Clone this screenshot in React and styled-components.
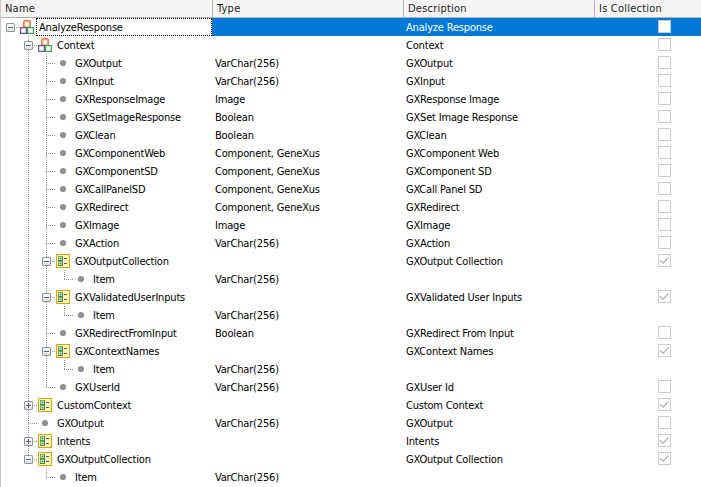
import React from "react";
import styled, { createGlobalStyle, css } from "styled-components";

const GlobalStyle = createGlobalStyle`
  body { margin: 0; background: #fff; overflow: hidden; }
`;

const dotsY = "repeating-linear-gradient(to bottom, #929292 0 1px, transparent 1px 2px)";
const dotsX = "repeating-linear-gradient(to right, #929292 0 1px, transparent 1px 2px)";

const TreeGrid = styled.div`
  box-sizing: border-box;
  width: 701px;
  height: 487px;
  overflow: hidden;
  border-left: 1px solid #c8c8c8;
  background: #fff;
  color: #000;
  font: 11px/19px Tahoma, "DejaVu Sans Condensed", "DejaVu Sans", sans-serif;
  font-stretch: condensed;
  letter-spacing: -0.18px;
  white-space: nowrap;
`;

const columns = css`
  display: grid;
  grid-template-columns: 211px 191px 191px 107px;
`;

const Header = styled.div`
  ${columns}
  box-sizing: border-box;
  height: 18px;
  background: #f4f4f4;
  border-bottom: 1px solid #b4b4b4;
`;

const HeaderCell = styled.div`
  box-sizing: border-box;
  padding-left: 4px;
  line-height: 17px;
  color: #1e1e1e;
  letter-spacing: 0.22px;
  & + & { border-left: 1px solid #b4b4b4; }
`;

const Row = styled.div`
  ${columns}
  grid-template-rows: 18px;
  height: 18px;
`;

const NameCell = styled.div`
  display: flex;
  padding-left: 1px;
  min-width: 0;
`;

const Guide = styled.span`
  flex: none;
  display: flex;
  align-items: center;
  width: 18px;
  height: 18px;
  background-repeat: no-repeat;
  background-image: ${(p) =>
    [p.$up && dotsY, p.$down && dotsY, p.$arm && dotsX].filter(Boolean).join(", ") || "none"};
  background-size: ${(p) =>
    [p.$up && "1px 10px", p.$down && "1px 8px", p.$arm && (p.$leaf ? "9px 1px" : "6px 1px")].filter(Boolean).join(", ")};
  background-position: ${(p) =>
    [p.$up && "8px 0", p.$down && "8px 10px", p.$arm && (p.$leaf ? "8px 9px" : "12px 9px")].filter(Boolean).join(", ")};
`;

const Toggle = styled.svg`
  display: block;
  width: 9px;
  height: 9px;
  margin: 1px 0 0 4px;
`;

const IconSlot = styled.span`
  flex: none;
  width: 16px;
  height: 14px;
  margin-top: 2px;
  svg { display: block; }
`;

const Label = styled.span`
  flex: ${(p) => (p.$focused ? 1 : "none")};
  box-sizing: border-box;
  height: 18px;
  padding-left: 3px;
  ${(p) =>
    p.$focused &&
    css`
      padding-left: 2px;
      line-height: 17px;
      border: 1px dotted #000;
    `}
`;

const Cell = styled.div`
  padding-left: 3px;
  background: ${(p) => (p.$selected ? "#0078d7" : "transparent")};
  color: ${(p) => (p.$selected ? "#fff" : "#000")};
`;

const CheckCell = styled(Cell)`
  display: flex;
  align-items: flex-start;
  padding: 2px 0 0 64px;
  box-sizing: border-box;
`;

const CheckBox = styled.svg`
  width: 13px;
  height: 13px;
`;

function ToggleBox({ open }) {
  return (
    <Toggle viewBox="0 0 9 9">
      <rect x=".5" y=".5" width="8" height="8" rx=".6" fill="#f6f6f6" stroke="#919191" />
      <path d="M1 6h7v2H1z" fill="#e2e2e2" />
      <path d={open ? "M2 4.5h5" : "M2 4.5h5M4.5 2v5"} stroke="#4560a5" />
    </Toggle>
  );
}

function StructureIcon() {
  return (
    <svg width="14" height="14" viewBox="0 0 14 14" fill="none">
      <path d="M3.6 7V2Q3.6.6 5 .6h4q1.4 0 1.4 1.4v5z" fill="#f6b797" stroke="#ef7b45" strokeWidth="1.2" />
      <path d="M5.4 2.4h3.2v4H5.4z" fill="#fff" />
      <path d="M.6 7.6h5.8v5.8H.6z" fill="#fff" stroke="#6650a7" strokeWidth="1.2" />
      <path d="M7.6 7.6h5.8v5.8H7.6z" fill="#fff" stroke="#38a653" strokeWidth="1.2" />
    </svg>
  );
}

function CollectionIcon() {
  return (
    <svg width="14" height="14" viewBox="0 0 14 14" shapeRendering="crispEdges">
      <rect x=".5" y=".5" width="13" height="13" fill="#fff9b4" stroke="#dfa013" />
      <path d="M2 2h5v5H2zM2 7h5v5H2z" fill="#68b26a" />
      <path d="M3 3h3v3H3zM3 8h3v3H3z" fill="#b9dfad" />
      <path d="M2 6h5v1H2zM2 11h5v1H2zM6 2h1v10H6z" fill="#468350" />
      <path d="M4 4h1v1H4zM4 9h1v1H4zM8 4h3v1H8zM8 9h3v1H8z" fill="#3c5b8e" />
    </svg>
  );
}

function LeafIcon() {
  return (
    <svg width="14" height="14" viewBox="0 0 14 14">
      <circle cx="7" cy="7" r="3.1" fill="#929292" />
    </svg>
  );
}

const icons = { structure: StructureIcon, collection: CollectionIcon, leaf: LeafIcon };

// guides: one character per level. "." blank, "|" passing line,
// "+" branch with a line below, "L" last branch, "r" root
const rows = [
  ["r", "open", "structure", "AnalyzeResponse", "", "Analyze Response", false],
  [".+", "open", "structure", "Context", "", "Context", false],
  [".|+", "", "leaf", "GXOutput", "VarChar(256)", "GXOutput", false],
  [".|+", "", "leaf", "GXInput", "VarChar(256)", "GXInput", false],
  [".|+", "", "leaf", "GXResponseImage", "Image", "GXResponse Image", false],
  [".|+", "", "leaf", "GXSetImageResponse", "Boolean", "GXSet Image Response", false],
  [".|+", "", "leaf", "GXClean", "Boolean", "GXClean", false],
  [".|+", "", "leaf", "GXComponentWeb", "Component, GeneXus", "GXComponent Web", false],
  [".|+", "", "leaf", "GXComponentSD", "Component, GeneXus", "GXComponent SD", false],
  [".|+", "", "leaf", "GXCallPanelSD", "Component, GeneXus", "GXCall Panel SD", false],
  [".|+", "", "leaf", "GXRedirect", "Component, GeneXus", "GXRedirect", false],
  [".|+", "", "leaf", "GXImage", "Image", "GXImage", false],
  [".|+", "", "leaf", "GXAction", "VarChar(256)", "GXAction", false],
  [".|+", "open", "collection", "GXOutputCollection", "", "GXOutput Collection", true],
  [".||L", "", "leaf", "Item", "VarChar(256)", "", null],
  [".|+", "open", "collection", "GXValidatedUserInputs", "", "GXValidated User Inputs", true],
  [".||L", "", "leaf", "Item", "VarChar(256)", "", null],
  [".|+", "", "leaf", "GXRedirectFromInput", "Boolean", "GXRedirect From Input", false],
  [".|+", "open", "collection", "GXContextNames", "", "GXContext Names", true],
  [".||L", "", "leaf", "Item", "VarChar(256)", "", null],
  [".|L", "", "leaf", "GXUserId", "VarChar(256)", "GXUser Id", false],
  [".+", "closed", "collection", "CustomContext", "", "Custom Context", true],
  [".+", "", "leaf", "GXOutput", "VarChar(256)", "GXOutput", false],
  [".+", "closed", "collection", "Intents", "", "Intents", true],
  [".L", "open", "collection", "GXOutputCollection", "", "GXOutput Collection", true],
  ["..L", "", "leaf", "Item", "VarChar(256)", "", null],
];

function TreeRow({ row, selected }) {
  const [guides, toggle, icon, name, type, description, checked] = row;
  const Icon = icons[icon];
  return (
    <Row>
      <NameCell>
        {[...guides].map((g, i) => {
          const own = i === guides.length - 1;
          return (
            <Guide
              key={i}
              $up={"|+L".includes(g)}
              $down={"|+".includes(g)}
              $arm={own}
              $leaf={own && !toggle}
            >
              {own && toggle && <ToggleBox open={toggle === "open"} />}
            </Guide>
          );
        })}
        <IconSlot><Icon /></IconSlot>
        <Label $focused={selected}>{name}</Label>
      </NameCell>
      <Cell $selected={selected}>{type}</Cell>
      <Cell $selected={selected}>{description}</Cell>
      <CheckCell $selected={selected}>
        {checked !== null && (
          <CheckBox viewBox="0 0 13 13">
            <rect x=".5" y=".5" width="12" height="12" fill="#fff" stroke="#ccc" />
            {checked && <path d="M2 6.2l3 3 5.6-5.8" fill="none" stroke="#b8b8b8" strokeWidth="1.5" />}
          </CheckBox>
        )}
      </CheckCell>
    </Row>
  );
}

export default function App() {
  return (
    <>
      <GlobalStyle />
      <TreeGrid>
        <Header>
          <HeaderCell>Name</HeaderCell>
          <HeaderCell>Type</HeaderCell>
          <HeaderCell>Description</HeaderCell>
          <HeaderCell>Is Collection</HeaderCell>
        </Header>
        {rows.map((row, i) => (
          <TreeRow key={i} row={row} selected={i === 0} />
        ))}
      </TreeGrid>
    </>
  );
}
